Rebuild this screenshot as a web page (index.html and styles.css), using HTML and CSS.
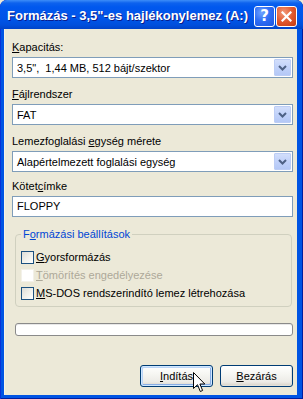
FILE: index.html
```html
<!DOCTYPE html>
<html lang="hu">
<head>
<meta charset="utf-8">
<title>Formázás</title>
<link rel="stylesheet" href="styles.css">
</head>
<body>
<div class="window">
  <div class="titlebar">
    <span class="title">Formázás - 3,5"-es hajlékonylemez (A:)</span>
    <div class="tb-buttons">
      <span class="tb-btn help">?</span>
      <span class="tb-btn close"><svg width="11" height="11" viewBox="0 0 11 11"><path d="M1.5 1.5 L9.5 9.5 M9.5 1.5 L1.5 9.5" stroke="#fff" stroke-width="2.2" stroke-linecap="square"/></svg></span>
    </div>
  </div>
  <div class="content">
    <div class="field">
      <div class="label"><u>K</u>apacitás:</div>
      <div class="select"><span class="value">3,5",  1,44 MB, 512 bájt/szektor</span><span class="drop"><svg width="15" height="15" viewBox="0 0 15 15"><path d="M4 6 L7.5 9.5 L11 6" fill="none" stroke="#4d6185" stroke-width="2"/></svg></span></div>
    </div>
    <div class="field">
      <div class="label"><u>F</u>ájlrendszer</div>
      <div class="select"><span class="value">FAT</span><span class="drop"><svg width="15" height="15" viewBox="0 0 15 15"><path d="M4 6 L7.5 9.5 L11 6" fill="none" stroke="#4d6185" stroke-width="2"/></svg></span></div>
    </div>
    <div class="field field-last">
      <div class="label">Lemezfoglalási <u>e</u>gység mérete</div>
      <div class="select"><span class="value">Alapértelmezett foglalási egység</span><span class="drop"><svg width="15" height="15" viewBox="0 0 15 15"><path d="M4 6 L7.5 9.5 L11 6" fill="none" stroke="#4d6185" stroke-width="2"/></svg></span></div>
    </div>
    <div class="field-input">
      <div class="label">Kötet<u>c</u>ímke</div>
      <div class="textbox">FLOPPY</div>
    </div>
    <fieldset class="group">
      <legend>F<u>o</u>rmázási beállítások</legend>
      <div class="check-row"><span class="checkbox"></span><span><u>G</u>yorsformázás</span></div>
      <div class="check-row disabled"><span class="checkbox"></span><span><u>T</u>ömörítés engedélyezése</span></div>
      <div class="check-row"><span class="checkbox"></span><span><u>M</u>S-DOS rendszerindító lemez létrehozása</span></div>
    </fieldset>
    <div class="progress"></div>
    <div class="buttons">
      <span class="btn default"><u>I</u>ndítás</span>
      <span class="btn"><u>B</u>ezárás</span>
    </div>
  </div>
  <svg class="cursor" width="13" height="21" viewBox="0 0 13 21"><path d="M0.5 0.5 L0.5 16.5 L4.5 12.7 L7.3 19.5 L9.6 18.5 L6.9 12 L11.8 12 Z" fill="#fff" stroke="#000" stroke-width="1" stroke-linejoin="miter"/></svg>
</div>
</body>
</html>
```
FILE: styles.css
```css
html, body {
  margin: 0;
  padding: 0;
  background: #ece9d8;
}
.window {
  position: relative;
  width: 303px;
  height: 399px;
  overflow: hidden;
  display: flex;
  flex-direction: column;
  background: #0054e3;
  border-radius: 7px 7px 0 0;
  box-shadow: inset 1px 0 #0831d9, inset -1px 0 #001ea0, inset 0 -1px #001ea0;
  font-family: "Liberation Sans", Arial, sans-serif;
  font-size: 11px;
  color: #000;
}
.titlebar {
  height: 29px;
  flex: none;
  display: flex;
  align-items: center;
  justify-content: space-between;
  padding: 0 6px 0 7px;
  background: linear-gradient(180deg, #3d8ef8 0px, #0d62ee 3px, #0058ee 7px, #0256ea 14px, #0054e6 20px, #004fdc 25px, #0043c8 29px);
  border-radius: 7px 7px 0 0;
}
.title {
  font-family: "Liberation Sans", Arial, sans-serif;
  font-weight: bold;
  font-size: 13px;
  color: #fff;
  text-shadow: 1px 1px 0 #0a1c8c;
  white-space: pre;
  margin-top: 1px;
}
.tb-buttons {
  display: flex;
  gap: 1px;
  margin-top: 4px;
}
.tb-btn {
  width: 21px;
  height: 21px;
  box-sizing: border-box;
  border: 1px solid #fff;
  border-radius: 3px;
  display: flex;
  align-items: center;
  justify-content: center;
  color: #fff;
}
.help {
  background: radial-gradient(circle at 35% 30%, #6fa3ff 0%, #2f6ef5 45%, #1a55e0 100%);
  font-family: "DejaVu Sans", sans-serif;
  font-weight: bold;
  font-size: 15px;
  line-height: 1;
}
.close {
  background: radial-gradient(circle at 35% 30%, #f39a7a 0%, #e0582e 50%, #c53a10 100%);
}
.content {
  flex: 1;
  margin: 0 6px 4px 4px;
  background: #ece9d8;
  padding: 12px 4px 0 8px;
  display: flex;
  flex-direction: column;
  box-shadow: inset 1px 0 #f4f2e8;
}
.label {
  height: 13px;
  line-height: 13px;
  white-space: pre;
}
.field {
  display: flex;
  flex-direction: column;
  gap: 3px;
  margin-bottom: 10px;
}
.field-last {
  margin-bottom: 8px;
}
.field-input {
  display: flex;
  flex-direction: column;
  gap: 3px;
}
.select {
  height: 21px;
  box-sizing: border-box;
  border: 1px solid #7f9db9;
  background: #fff;
  display: flex;
  align-items: center;
  justify-content: space-between;
}
.value {
  padding-left: 4px;
  white-space: pre;
}
.drop {
  width: 17px;
  height: 17px;
  margin: 1px;
  box-sizing: border-box;
  border: 1px solid #bccdf5;
  border-radius: 1px;
  background: linear-gradient(180deg, #d2defb 0%, #c1d2fa 50%, #b4c8f6 100%);
  display: flex;
  align-items: center;
  justify-content: center;
}
.textbox {
  height: 21px;
  box-sizing: border-box;
  border: 1px solid #7f9db9;
  background: #fff;
  padding-left: 4px;
  line-height: 19px;
}
.group {
  margin: 11px 1px 0 3px;
  padding: 7px 5px 4px 5px;
  border: 1px solid #d0d0bf;
  border-radius: 4px;
  min-width: 0;
}
.group legend {
  padding: 0 2px;
  color: #0046d5;
  line-height: 13px;
  height: 13px;
}
.check-row {
  height: 18px;
  display: flex;
  align-items: center;
  gap: 2px;
  white-space: pre;
}
.checkbox {
  width: 13px;
  height: 13px;
  box-sizing: border-box;
  border: 1px solid #1c5180;
  background: linear-gradient(135deg, #dcdcd7 0%, #f0f0ea 50%, #ffffff 100%);
  flex: none;
}
.disabled {
  color: #aca899;
}
.disabled .checkbox {
  border-color: #f3f1e9;
  background: #fff;
}
.progress {
  margin: 16px 0 0 3px;
  height: 13px;
  box-sizing: border-box;
  border: 1px solid #8a8a8a;
  border-radius: 3px;
  background: #fff;
  box-shadow: inset 0 1px #e8e8e8;
}
.buttons {
  margin-top: 29px;
  display: flex;
  justify-content: flex-end;
  gap: 7px;
}
.btn {
  width: 73px;
  height: 22px;
  box-sizing: border-box;
  border: 1px solid #003c74;
  border-radius: 3px;
  background: linear-gradient(180deg, #ffffff 0%, #f6f6f2 40%, #ecebe6 80%, #d6d0c5 100%);
  display: flex;
  align-items: center;
  justify-content: center;
  box-shadow: inset -1px -1px #e3e1d8;
}
.btn.default {
  box-shadow: inset 0 0 0 1px #cee7ff, inset 1px 1px 0 1px #bcd4f6, inset -1px -1px 0 1px #89ade4;
}
.cursor {
  position: absolute;
  left: 193px;
  top: 372px;
}
```
